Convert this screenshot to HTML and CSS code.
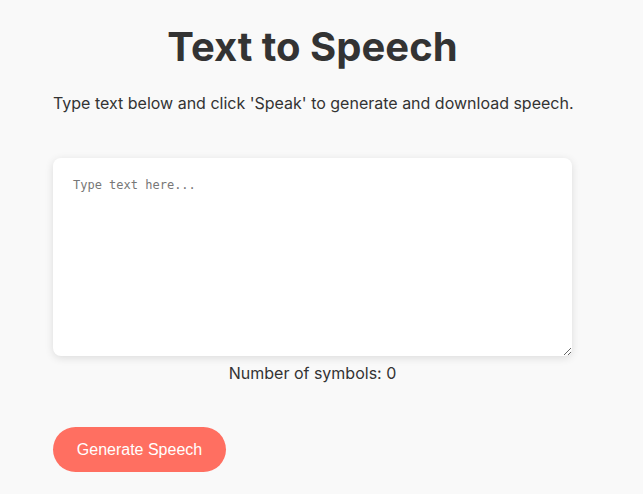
FILE: index.html
```html
<!DOCTYPE html>
<html lang="en">
<head>
<meta charset="utf-8">
<title>Text to Speech</title>
<link rel="stylesheet" href="styles.css">
</head>
<body>
<div class="page">
  <main class="container">
    <h1 class="title">Text to Speech</h1>
    <p class="lead">Type text below and click 'Speak' to generate and download speech.</p>
    <textarea class="input" placeholder="Type text here..."></textarea>
    <div class="count">Number of symbols: 0</div>
    <button class="btn">Generate Speech</button>
  </main>
</div>
</body>
</html>
```

FILE: styles.css
```css
html, body {
  margin: 0;
  padding: 0;
  background: #f9f9f9;
}
.page {
  width: 625px;
}
.container {
  width: 519px;
  margin: 0 auto;
  display: flex;
  flex-direction: column;
  align-items: stretch;
  font-family: Inter, "Noto Sans", sans-serif;
  color: #333;
}
.title {
  margin: 23px 0 0;
  font-size: 40px;
  font-weight: 700;
  line-height: 48px;
  text-align: center;
  color: #333;
}
.lead {
  margin: 20px 0 0;
  font-size: 16px;
  line-height: 24px;
  white-space: nowrap;
}
.input {
  margin-top: 43px;
  box-sizing: border-box;
  width: 519px;
  height: 198px;
  padding: 20px;
  border: none;
  border-radius: 8px;
  background: #fff;
  box-shadow: 0 2px 8px rgba(0,0,0,0.12);
  font-family: "DejaVu Sans Mono", monospace;
  font-size: 12px;
  color: #333;
  outline: none;
}
.input::placeholder {
  color: #777;
}
.count {
  margin-top: 7px;
  text-align: center;
  font-family: Inter, "Noto Sans", sans-serif;
  font-size: 16px;
  line-height: 20px;
  color: #333;
}
.btn {
  align-self: flex-start;
  margin-top: 44px;
  width: 173px;
  height: 45px;
  border: none;
  border-radius: 23px;
  background: #ff6f61;
  color: #fff;
  font-family: "Liberation Sans", Arial, sans-serif;
  font-size: 16px;
  cursor: pointer;
}
```
